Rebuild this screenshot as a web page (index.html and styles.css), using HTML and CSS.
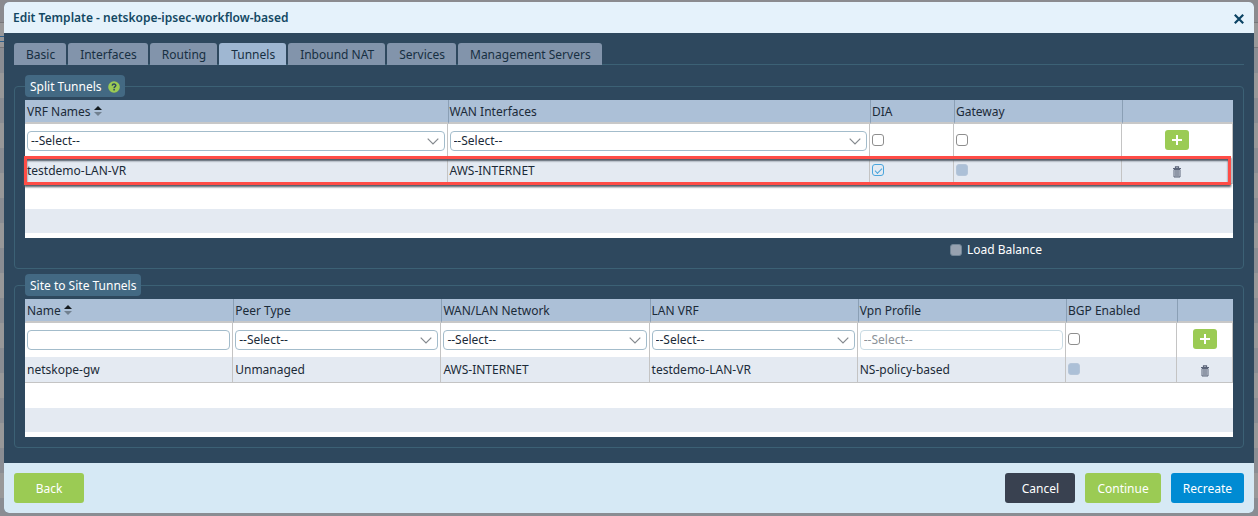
FILE: index.html
```
<!DOCTYPE html>
<html lang="en">
<head>
<meta charset="utf-8">
<title>Edit Template</title>
<link rel="stylesheet" href="styles.css">
</head>
<body>
<svg class="defs" width="0" height="0" aria-hidden="true">
  <symbol id="trash" viewBox="0 0 8 12"><path d="M0 2.500h8M2.500 2V.8h3V2" fill="none" stroke="#5b6479" stroke-width="1.200"/><path d="M1 3.500h6V11H1z" fill="#dfe5ee" stroke="#5b6479"/><path d="M3 4v6.500M5 4v6.500" stroke="#5b6479" stroke-width="1.200"/></symbol>
  <symbol id="plus" viewBox="0 0 10 10"><path d="M5 0v10M0 5h10" stroke="#fff" stroke-width="2"/></symbol>
  <symbol id="chev" viewBox="0 0 12 7"><path d="M.7.700 6 6 11.300.7" fill="none" stroke="#84898e" stroke-width="1.200"/></symbol>
  <symbol id="sort" viewBox="0 0 8 10"><path d="M0 4 4 0l4 4z" fill="#151b20"/><path d="M0 6h8l-4 4z" fill="#71808f"/></symbol>
</svg>
<main class="dialog">
  <header class="dialog-head">
    <h1>Edit Template - netskope-ipsec-workflow-based</h1>
    <button class="close" type="button" aria-label="Close"><svg width="10" height="10" viewBox="0 0 10 10"><path d="M.8.8l8.400 8.400M9.200.8L.8 9.200" stroke="#0b4363" stroke-width="2.200"/></svg></button>
  </header>
  <div class="dialog-body">
    <nav class="tabs">
      <button type="button">Basic</button>
      <button type="button">Interfaces</button>
      <button type="button">Routing</button>
      <button type="button" class="active">Tunnels</button>
      <button type="button">Inbound NAT</button>
      <button type="button">Services</button>
      <button type="button">Management Servers</button>
    </nav>

    <fieldset class="group">
      <legend>Split Tunnels <svg class="help" width="12" height="12" viewBox="0 0 12 12"><circle cx="6" cy="6" r="5.800" fill="#9bcb54"/><path d="M4.200 4.600C4.300 2.600 7.900 2.600 7.800 4.600 7.800 5.700 6.100 5.700 6.100 7.200M6.100 8.100v1.500" fill="none" stroke="#2e485e" stroke-width="1.500"/></svg></legend>
      <div class="grid">
        <table>
          <colgroup><col><col><col class="w-dia"><col class="w-gateway"><col class="w-add"></colgroup>
          <thead><tr><th>VRF Names <svg class="sort" width="8" height="10"><use href="#sort"/></svg></th><th>WAN Interfaces</th><th>DIA</th><th>Gateway</th><th></th></tr></thead>
          <tbody>
            <tr class="entry">
              <td><div class="pick"><select aria-label="VRF Names"><option>--Select--</option></select><svg width="12" height="7"><use href="#chev"/></svg></div></td>
              <td><div class="pick"><select aria-label="WAN Interfaces"><option>--Select--</option></select><svg width="12" height="7"><use href="#chev"/></svg></div></td>
              <td><input type="checkbox" aria-label="DIA"></td>
              <td><input type="checkbox" aria-label="Gateway"></td>
              <td class="act"><button class="add" type="button" aria-label="Add"><svg width="10" height="10"><use href="#plus"/></svg></button></td>
            </tr>
            <tr class="data">
              <td>testdemo-LAN-VR</td><td>AWS-INTERNET</td>
              <td><input type="checkbox" aria-label="DIA enabled" checked></td>
              <td><input type="checkbox" aria-label="Gateway enabled" disabled></td>
              <td class="act"><button class="del" type="button" aria-label="Delete"><svg width="8" height="12"><use href="#trash"/></svg></button></td>
            </tr>
          </tbody>
        </table>
        <div class="blank"></div>
        <div class="mark"></div>
      </div>
      <label class="balance"><input type="checkbox" disabled>Load Balance</label>
    </fieldset>

    <fieldset class="group">
      <legend>Site to Site Tunnels</legend>
      <div class="grid">
        <table>
          <colgroup><col><col><col><col><col><col class="w-bgp"><col class="w-site-add"></colgroup>
          <thead><tr><th>Name <svg class="sort" width="8" height="10"><use href="#sort"/></svg></th><th>Peer Type</th><th>WAN/LAN Network</th><th>LAN VRF</th><th>Vpn Profile</th><th>BGP Enabled</th><th></th></tr></thead>
          <tbody>
            <tr class="entry">
              <td><input class="text" type="text" aria-label="Name"></td>
              <td><div class="pick"><select aria-label="Peer Type"><option>--Select--</option></select><svg width="12" height="7"><use href="#chev"/></svg></div></td>
              <td><div class="pick"><select aria-label="WAN/LAN Network"><option>--Select--</option></select><svg width="12" height="7"><use href="#chev"/></svg></div></td>
              <td><div class="pick"><select aria-label="LAN VRF"><option>--Select--</option></select><svg width="12" height="7"><use href="#chev"/></svg></div></td>
              <td><div class="pick"><select aria-label="Vpn Profile" disabled><option>--Select--</option></select></div></td>
              <td><input type="checkbox" aria-label="BGP Enabled"></td>
              <td class="act"><button class="add" type="button" aria-label="Add"><svg width="10" height="10"><use href="#plus"/></svg></button></td>
            </tr>
            <tr class="data">
              <td>netskope-gw</td><td>Unmanaged</td><td>AWS-INTERNET</td><td>testdemo-LAN-VR</td><td>NS-policy-based</td>
              <td><input type="checkbox" aria-label="BGP on" disabled></td>
              <td class="act"><button class="del" type="button" aria-label="Delete"><svg width="8" height="12"><use href="#trash"/></svg></button></td>
            </tr>
          </tbody>
        </table>
        <div class="blank"></div>
      </div>
    </fieldset>
  </div>
  <footer class="dialog-foot">
    <button type="button" class="btn green">Back</button>
    <div class="right">
      <button type="button" class="btn dark">Cancel</button>
      <button type="button" class="btn green">Continue</button>
      <button type="button" class="btn blue">Recreate</button>
    </div>
  </footer>
</main>
</body>
</html>
```
FILE: styles.css
```
* { box-sizing: border-box; }
html { min-height: 100%; background: #8b8b8f; }
body {
  margin: 0;
  padding: 2px 4px 3px;
  font: 12px/16px "Noto Sans", "Open Sans", sans-serif;
  color: #1b2a38;
  background:
    linear-gradient(#8b8b8f, #8b8b8f) 0 0 / 100% 22px no-repeat,
    linear-gradient(#2c5f8c, #2c5f8c) 0 36px / 4px 1px no-repeat,
    linear-gradient(#2c5f8c, #2c5f8c) 0 41px / 4px 1px no-repeat,
    linear-gradient(#77777a, #77777a) 0 22px / 100% 1px no-repeat,
    linear-gradient(#77777a, #77777a) 0 47px / 100% 1px no-repeat,
    repeating-linear-gradient(#8a8d93 0 23px, #989899 23px 48px, #8a8d93 48px 50px);
}
button, input, select { font: inherit; color: inherit; margin: 0; }
button { border: 0; padding: 0; background: none; cursor: pointer; }
svg { display: block; }
.defs { position: absolute; }

.dialog { border-radius: 5px; overflow: hidden; background: #2e485e; }
.dialog-head {
  display: flex;
  justify-content: space-between;
  align-items: center;
  height: 31px;
  padding: 0 10px 0 9px;
  background: #e5f2fb;
}
.dialog-head h1 { margin: 0; font-size: 12px; font-weight: 600; color: #134863; }
.close { padding-top: 3px; }

.dialog-body { padding: 10px 10px 15px; }
.tabs { display: flex; gap: 2px; border-bottom: 1px solid #3c6175; }
.tabs button {
  height: 22px;
  margin-bottom: -1px;
  padding: 2px 11px 0 12px;
  border-radius: 3px 3px 0 0;
  background: #8294ab;
  color: #172f42;
}
.tabs .active { background: #9fb7d2; }

.group {
  min-width: 0;
  margin: 10px 0 0;
  padding: 3px 10px 10px;
  border: 1px solid #3c6175;
  border-radius: 4px;
}
.group + .group { margin-top: 5px; }
.group legend {
  display: flex;
  align-items: center;
  gap: 6px;
  height: 22px;
  padding: 1px 5px 0;
  border-radius: 4px;
  background: #436983;
  color: #fff;
}

.grid { position: relative; background: #fff; }
table { width: 100%; table-layout: fixed; border-collapse: separate; border-spacing: 0; }
.w-dia { width: 84px; }
.w-gateway { width: 168px; }
.w-add { width: 111px; }
.w-bgp { width: 111px; }
.w-site-add { width: 56px; }
th {
  height: 24px;
  padding: 2px 1px 0;
  text-align: left;
  font-weight: 400;
  background: #acc0d7;
  border-left: 1px solid #8a9fb5;
  border-bottom: 2px solid #c8c8c8;
}
th:first-child { border-left-color: #acc0d7; }
.sort { display: inline-block; }
td { padding: 0 2px; border-right: 1px solid #c4c4c4; }
.entry td { height: 34px; }
.data td { height: 26px; background: #e4eaf2; border-bottom: 1px solid #c4c4c4; }
.blank { height: 54px; background: linear-gradient(#e4eaf2, #e4eaf2) 0 25px / 100% 24px no-repeat; }

.pick { position: relative; }
.pick select, .text {
  display: block;
  width: 100%;
  height: 20px;
  padding: 0 3px;
  border: 1px solid #a3bccb;
  border-radius: 4px;
  background: #fff;
  appearance: none;
}
.pick select:disabled { color: #8b9298; border-color: #c9dbe4; opacity: 1; }
.pick svg { position: absolute; right: 6px; top: 7px; pointer-events: none; }

input[type="checkbox"] {
  appearance: none;
  display: block;
  width: 12px;
  height: 12px;
  border: 1px solid #8e8e8e;
  border-radius: 3px;
  background: #fff;
}
td input[type="checkbox"] { margin-bottom: 2px; }
input[type="checkbox"]:disabled { border-color: #b4c5d9; background: #acc0d7; }
input[type="checkbox"]:checked { border-color: #4aa5dc; background: #e4eaf2; }
input[type="checkbox"]:checked::after {
  content: "";
  display: block;
  width: 6px;
  height: 3px;
  margin: 3px 2px;
  border: solid #4aa5dc;
  border-width: 0 0 1px 1px;
  transform: rotate(-45deg);
}
.act button { display: flex; align-items: center; justify-content: center; margin: 0 auto; }
.act .add { width: 24px; height: 20px; margin-bottom: 2px; border-radius: 3px; background: #9bcb54; }
.act .del { padding-top: 2px; }

.mark {
  position: absolute;
  top: 56px;
  left: -1px;
  right: 2px;
  height: 29px;
  border: 3px solid #ff4d47;
  box-shadow: 0 2px 2px #4f5964, inset 0 2px 2px #4f5964;
  pointer-events: none;
}
.balance {
  display: flex;
  align-items: center;
  gap: 5px;
  width: max-content;
  margin: 4px 191px 0 auto;
  color: #fff;
}
.balance input[type="checkbox"] { border-color: #718596; background: #97a2b0; }

.dialog-foot {
  display: flex;
  justify-content: space-between;
  padding: 10px;
  background: #d6e9f5;
}
.right { display: flex; gap: 10px; }
.btn {
  min-width: 70px;
  height: 30px;
  padding: 2px 12px 0;
  border-radius: 3px;
  color: #fff;
}
.green { background: #9bcb54; }
.dark { background: #394150; }
.blue { background: #008bd3; }
```
